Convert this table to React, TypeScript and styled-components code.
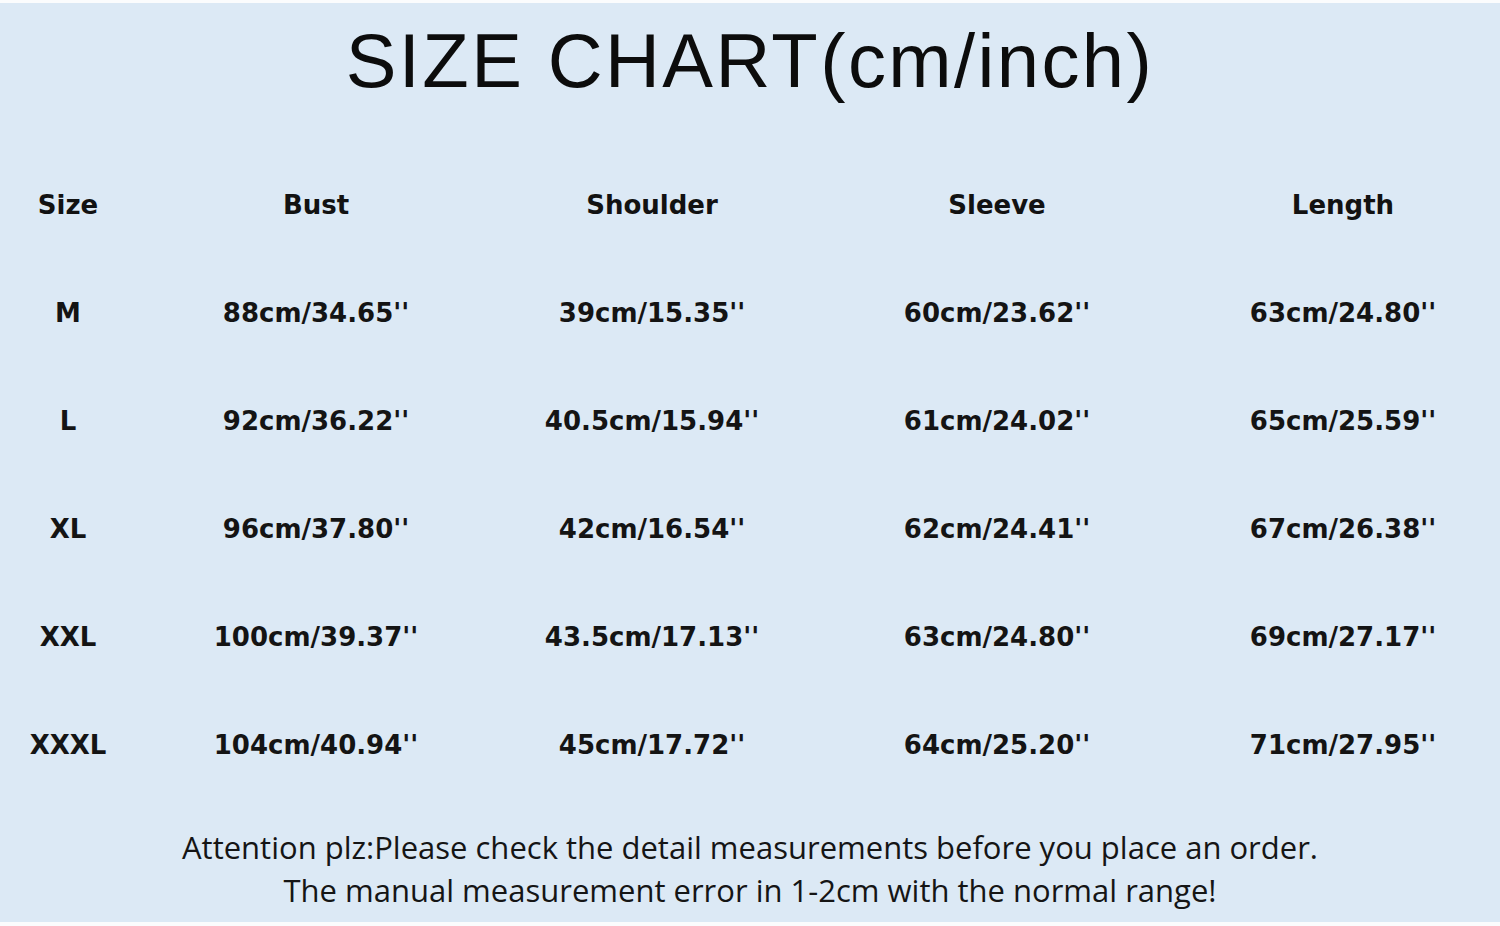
import React from "react";
import styled, { createGlobalStyle } from "styled-components";

const Global = createGlobalStyle`
  html, body { margin: 0; padding: 0; background: #ffffff; }
  * { box-sizing: border-box; }
`;

const Page = styled.div`
  width: 1500px;
  height: 926px;
  padding-top: 3px;
  padding-bottom: 4px;
  background: #fbfcfd;
`;

const Panel = styled.div`
  height: 100%;
  background: #dce9f5;
  display: flex;
  flex-direction: column;
  color: #111111;
`;

const Title = styled.h1`
  margin: 0;
  height: 148px;
  padding-top: 13px;
  text-align: center;
  font-family: "Liberation Sans", Arial, sans-serif;
  font-weight: 400;
  font-size: 76px;
  line-height: 90px;
  letter-spacing: 2.4px;
  color: #0c0c0c;
`;

const Grid = styled.div`
  display: grid;
  grid-template-columns: 136px 360px 312px 378px 314px;
  grid-auto-rows: 108px;
`;

const Cell = styled.div<{ $head?: boolean }>`
  display: flex;
  align-items: center;
  justify-content: center;
  font-family: "DejaVu Sans", Verdana, sans-serif;
  font-weight: 700;
  font-size: 26px;
  color: ${(p) => (p.$head ? "#121212" : "#141414")};
`;

const Notes = styled.div`
  margin-top: 27px;
  display: flex;
  flex-direction: column;
  align-items: center;
  font-family: "Open Sans", "Noto Sans", sans-serif;
  font-size: 31px;
  line-height: 43px;
  color: #151515;
`;

const headers = ["Size", "Bust", "Shoulder", "Sleeve", "Length"];
const rows = [
  ["M", "88cm/34.65''", "39cm/15.35''", "60cm/23.62''", "63cm/24.80''"],
  ["L", "92cm/36.22''", "40.5cm/15.94''", "61cm/24.02''", "65cm/25.59''"],
  ["XL", "96cm/37.80''", "42cm/16.54''", "62cm/24.41''", "67cm/26.38''"],
  ["XXL", "100cm/39.37''", "43.5cm/17.13''", "63cm/24.80''", "69cm/27.17''"],
  ["XXXL", "104cm/40.94''", "45cm/17.72''", "64cm/25.20''", "71cm/27.95''"],
];

export default function App() {
  return (
    <>
      <Global />
      <Page>
        <Panel>
          <Title>SIZE CHART(cm/inch)</Title>
          <Grid>
            {headers.map((h) => (
              <Cell key={h} $head>
                {h}
              </Cell>
            ))}
            {rows.map((r) =>
              r.map((v, i) => <Cell key={r[0] + i}>{v}</Cell>)
            )}
          </Grid>
          <Notes>
            <span>Attention plz:Please check the detail measurements before you place an order.</span>
            <span>The manual measurement error in 1-2cm with the normal range!</span>
          </Notes>
        </Panel>
      </Page>
    </>
  );
}
